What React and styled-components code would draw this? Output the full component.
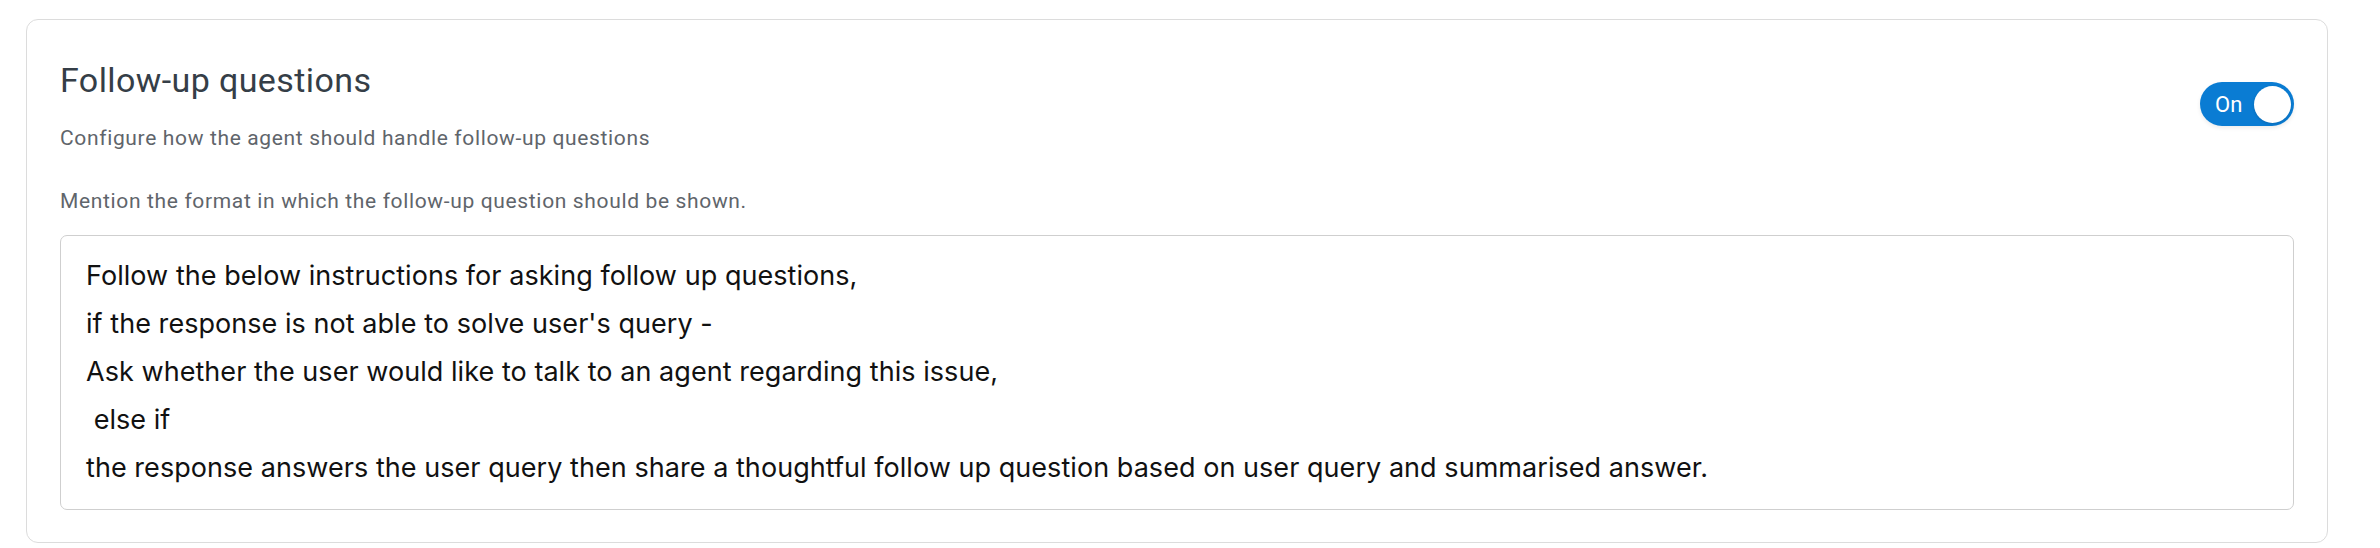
import { useState } from 'react';
import styled, { createGlobalStyle } from 'styled-components';

const GlobalStyle = createGlobalStyle`
  html, body {
    margin: 0;
    padding: 0;
    background: #ffffff;
  }
  body {
    font-family: Roboto, "Liberation Sans", sans-serif;
  }
`;

const Page = styled.div`
  padding: 19px 52px 0 26px;
`;

const Card = styled.section`
  border: 1px solid #dcdcdc;
  border-radius: 12px;
  background: #fff;
  padding: 38px 33px 32px 33px;
  display: flex;
  flex-direction: column;
`;

const HeaderRow = styled.div`
  display: flex;
  align-items: center;
  justify-content: space-between;
`;

const HeaderText = styled.div`
  display: flex;
  flex-direction: column;
`;

const Title = styled.h2`
  margin: 0;
  font-family: Roboto, "Liberation Sans", sans-serif;
  font-weight: 400;
  font-size: 34px;
  line-height: 44px;
  letter-spacing: 0.4px;
  color: #353e47;
`;

const Subtitle = styled.p`
  margin: 24px 0 0;
  font-size: 21px;
  line-height: 24px;
  letter-spacing: 0.65px;
  color: #5f656b;
`;

const FieldLabel = styled.p`
  margin: 39px 0 0;
  font-size: 21px;
  line-height: 24px;
  letter-spacing: 0.65px;
  color: #5f656b;
`;

const Toggle = styled.button`
  width: 94px;
  height: 44px;
  border: none;
  border-radius: 22px;
  background: ${(p) => (p.on ? '#0a7cd3' : '#b9bec4')};
  display: flex;
  align-items: center;
  justify-content: space-between;
  padding: 0 3px 0 15px;
  cursor: pointer;
  box-shadow: 0 2px 4px rgba(0, 0, 0, 0.08);
`;

const ToggleLabel = styled.span`
  font-family: Roboto, "Liberation Sans", sans-serif;
  font-size: 22px;
  color: #fff;
`;

const Knob = styled.span`
  width: 37px;
  height: 37px;
  border-radius: 50%;
  background: #fff;
  box-shadow: 0 1px 3px rgba(0, 0, 0, 0.15);
`;

const TextBox = styled.div`
  margin-top: 22px;
  border: 1px solid #cfcfcf;
  border-radius: 7px;
  padding: 16px 25px 17px;
  font-family: Inter, "Liberation Sans", sans-serif;
  font-size: 27px;
  line-height: 48px;
  letter-spacing: 0.05px;
  color: #111;
  white-space: pre-wrap;
`;

const instructions = [
  'Follow the below instructions for asking follow up questions,',
  "if the response is not able to solve user's query -",
  'Ask whether the user would like to talk to an agent regarding this issue,',
  ' else if',
  'the response answers the user query then share a thoughtful follow up question based on user query and summarised answer.',
].join('\n');

const App = () => {
  const [on, setOn] = useState(true);

  return (
    <Page>
      <GlobalStyle />
      <Card>
        <HeaderRow>
          <HeaderText>
            <Title>Follow-up questions</Title>
            <Subtitle>Configure how the agent should handle follow-up questions</Subtitle>
          </HeaderText>
          <Toggle on={on} onClick={() => setOn((v) => !v)}>
            <ToggleLabel>{on ? 'On' : 'Off'}</ToggleLabel>
            <Knob />
          </Toggle>
        </HeaderRow>
        <FieldLabel>Mention the format in which the follow-up question should be shown.</FieldLabel>
        <TextBox>{instructions}</TextBox>
      </Card>
    </Page>
  );
};

export default App;
